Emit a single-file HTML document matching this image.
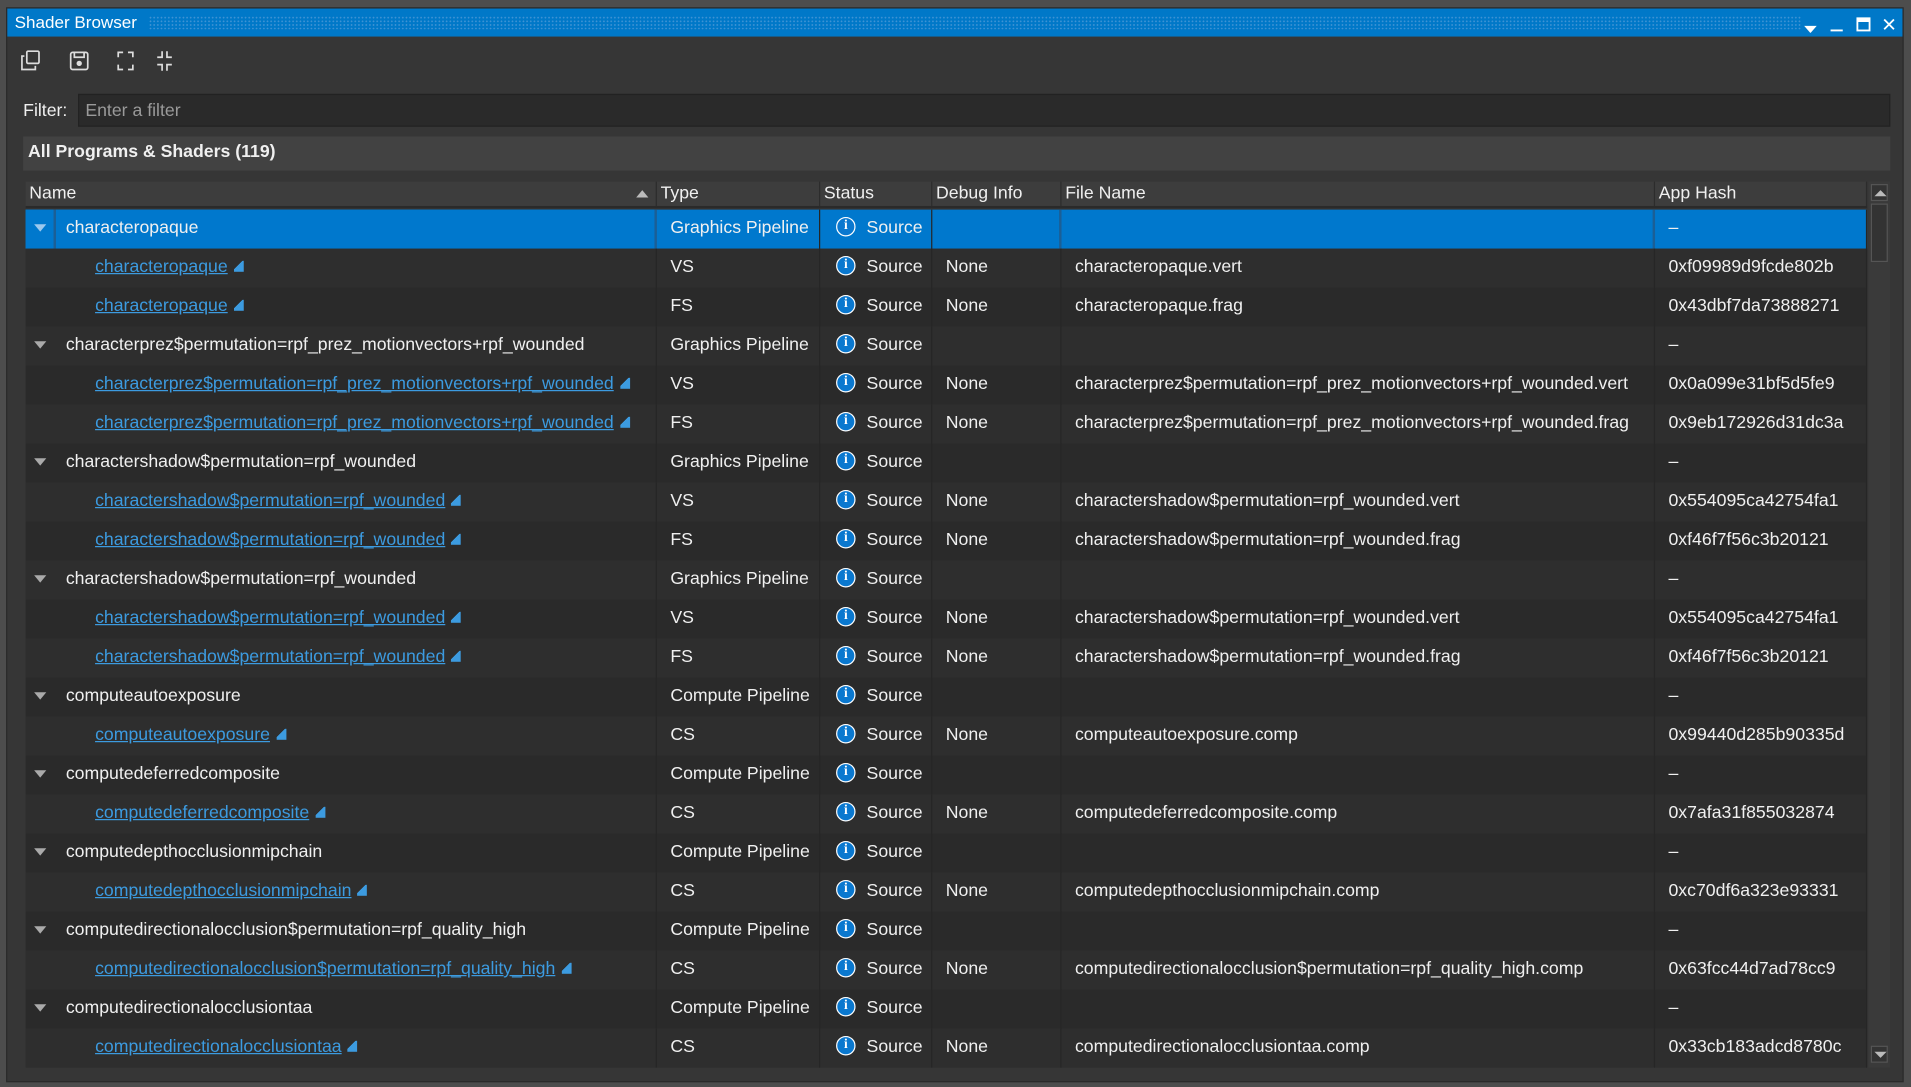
<!DOCTYPE html>
<html><head><meta charset="utf-8"><style>
*{margin:0;padding:0;box-sizing:border-box}
html,body{width:1911px;height:1087px;overflow:hidden;background:#4d4d4d}
#s{position:absolute;left:0;top:0;width:1568px;height:892px;transform:scale(1.21875);transform-origin:0 0;font-family:"Liberation Sans",sans-serif;font-size:14.5px;color:#f0f0f0}
.win{position:absolute;left:5px;top:6px;width:1557px;height:882px;background:#363636;border:1px solid #2a2a2a}
.tb{position:absolute;left:0;top:0;width:100%;height:23px;background:#0078c8}
.hatch{position:absolute;left:116px;top:6px;width:1356px;height:11px;background-image:radial-gradient(#3f93d4 0.6px,transparent 0.8px);background-size:3px 3px}
.abs{position:absolute}
.filter{position:absolute;left:58px;top:70px;width:1487px;height:27px;background:#2a2a2a;border:1px solid #222;color:#9a9a9a;padding:5px 5px;font-size:14.5px}
.grp{position:absolute;left:13px;top:105px;width:1532px;height:28px;background:#424242;font-weight:bold;padding:5px 4px}
.hdr{position:absolute;left:15px;top:142px;width:1511px;height:22px;background:#3d3d3d;display:flex;border-bottom:2px solid #2a2a2a}
.hdr div{border-right:1px solid #2c2c2c;padding:2px 3px}
.r{position:absolute;left:15px;width:1511px;height:32px;display:flex;line-height:30px}
.r>div{border-right:1px solid #262626;white-space:nowrap;overflow:hidden}
.c1{width:518px}.c2{width:134px;padding-left:11px}.c3{width:92px;padding-left:13px}.c4{width:106px;padding-left:11px}.c5{width:487px;padding-left:11px}.c6{width:174px;padding-left:11px}
.a{background:#2e2e2e}.b{background:#2a2a2a}
.sel{background:#0078cd}
.p{padding-left:33px;position:relative}
.p::before{content:"";position:absolute;left:7px;top:12px;border-left:5px solid transparent;border-right:5px solid transparent;border-top:6px solid #aaa}
.sel .p::before{border-top-color:#9cc8ee}
.ch{padding-left:57px}
.ch a{color:#3c9be0;text-decoration:underline}
.ln{display:inline-block;width:8px;height:9px;margin-left:5px;background:linear-gradient(135deg,transparent 40%,#3c9be0 40%);vertical-align:0}
.i{display:inline-block;position:relative;top:-1px;width:16px;height:16px;border-radius:50%;background:#0a78cf;border:1.5px solid #fff;color:#fff;font-size:11px;font-weight:bold;text-align:center;line-height:13px;vertical-align:middle;margin-right:9px;font-family:"Liberation Serif",serif}
.sb{position:absolute;left:1527px;top:142px;width:18px;height:727px;background:#3a3a3a}
</style></head><body><div id="s">
<div class="win">
<div class="tb"><span class="abs" style="left:6px;top:3px;color:#fff;font-size:14px">Shader Browser</span><div class="hatch"></div>
<svg class="abs" style="left:1474px;top:6px" width="80" height="14" viewBox="0 0 80 14" fill="none" stroke="#fff" stroke-width="1.5"><path d="M2 9h7l-3.5 4z" fill="#fff"/><path d="M22 12h10"/><rect x="44" y="2" width="10" height="10"/><path d="M44 3.5h10" stroke-width="3"/><path d="M66 3l8 8M74 3l-8 8"/></svg></div>
<svg class="abs" style="left:10px;top:33px" width="130" height="20" viewBox="0 0 130 20" fill="none" stroke="#ddd" stroke-width="1.4"><rect x="6" y="2" width="10" height="10" rx="1"/><path d="M4 6H2v11h11v-3"/><rect x="42" y="3" width="14" height="14" rx="1.5"/><path d="M45 3v4h8V3"/><circle cx="49" cy="12" r="1.5" fill="#ddd"/><path d="M81 7V3h4M89 3h4v4M93 13v4h-4M85 17h-4v-4"/><path d="M117 2v5h-4M121 2v5h4M113 13h4v5M125 13h-4v5"/></svg>
<span class="abs" style="left:13px;top:76px">Filter:</span>
<div class="filter">Enter a filter</div>
<div class="grp">All Programs &amp; Shaders (119)</div>
<div class="hdr"><div style="width:518px;position:relative">Name<span style="position:absolute;right:6px;top:7px;border-left:5px solid transparent;border-right:5px solid transparent;border-bottom:6px solid #bbb"></span></div><div style="width:134px">Type</div><div style="width:92px">Status</div><div style="width:106px">Debug Info</div><div style="width:487px">File Name</div><div style="width:174px">App Hash</div></div>
<div class="sb"><div style="position:absolute;left:2px;top:2px;width:14px;height:14px;border:1px solid #555;background:#333"><div style="margin:4px 0 0 2px;border-left:5px solid transparent;border-right:5px solid transparent;border-bottom:5px solid #bbb;width:0"></div></div><div style="position:absolute;left:2px;top:18px;width:14px;height:48px;border:1px solid #555;background:#333"></div><div style="position:absolute;left:2px;top:709px;width:14px;height:14px;border:1px solid #555;background:#333"><div style="margin:4px 0 0 2px;border-left:5px solid transparent;border-right:5px solid transparent;border-top:5px solid #bbb;width:0"></div></div></div>

<div class="r sel" style="top:165px"><div class="c1 p" style="background:linear-gradient(to right,#0078cd 23px,#1b5f96 23px,#1b5f96 25px,#0078cd 25px);border-right:2px solid #1b5f96">characteropaque</div><div class="c2">Graphics Pipeline</div><div class="c3"><span class="i">i</span>Source</div><div class="c4" style="border-right:2px solid #1b5f96"></div><div class="c5" style="border-right:2px solid #1b5f96"></div><div class="c6">–</div></div>
<div class="r a" style="top:197px"><div class="c1 ch"><a>characteropaque</a><span class="ln"></span></div><div class="c2">VS</div><div class="c3"><span class="i">i</span>Source</div><div class="c4">None</div><div class="c5">characteropaque.vert</div><div class="c6">0xf09989d9fcde802b</div></div>
<div class="r b" style="top:229px"><div class="c1 ch"><a>characteropaque</a><span class="ln"></span></div><div class="c2">FS</div><div class="c3"><span class="i">i</span>Source</div><div class="c4">None</div><div class="c5">characteropaque.frag</div><div class="c6">0x43dbf7da73888271</div></div>
<div class="r a" style="top:261px"><div class="c1 p">characterprez$permutation=rpf_prez_motionvectors+rpf_wounded</div><div class="c2">Graphics Pipeline</div><div class="c3"><span class="i">i</span>Source</div><div class="c4"></div><div class="c5"></div><div class="c6">–</div></div>
<div class="r b" style="top:293px"><div class="c1 ch"><a>characterprez$permutation=rpf_prez_motionvectors+rpf_wounded</a><span class="ln"></span></div><div class="c2">VS</div><div class="c3"><span class="i">i</span>Source</div><div class="c4">None</div><div class="c5">characterprez$permutation=rpf_prez_motionvectors+rpf_wounded.vert</div><div class="c6">0x0a099e31bf5d5fe9</div></div>
<div class="r a" style="top:325px"><div class="c1 ch"><a>characterprez$permutation=rpf_prez_motionvectors+rpf_wounded</a><span class="ln"></span></div><div class="c2">FS</div><div class="c3"><span class="i">i</span>Source</div><div class="c4">None</div><div class="c5">characterprez$permutation=rpf_prez_motionvectors+rpf_wounded.frag</div><div class="c6">0x9eb172926d31dc3a</div></div>
<div class="r b" style="top:357px"><div class="c1 p">charactershadow$permutation=rpf_wounded</div><div class="c2">Graphics Pipeline</div><div class="c3"><span class="i">i</span>Source</div><div class="c4"></div><div class="c5"></div><div class="c6">–</div></div>
<div class="r a" style="top:389px"><div class="c1 ch"><a>charactershadow$permutation=rpf_wounded</a><span class="ln"></span></div><div class="c2">VS</div><div class="c3"><span class="i">i</span>Source</div><div class="c4">None</div><div class="c5">charactershadow$permutation=rpf_wounded.vert</div><div class="c6">0x554095ca42754fa1</div></div>
<div class="r b" style="top:421px"><div class="c1 ch"><a>charactershadow$permutation=rpf_wounded</a><span class="ln"></span></div><div class="c2">FS</div><div class="c3"><span class="i">i</span>Source</div><div class="c4">None</div><div class="c5">charactershadow$permutation=rpf_wounded.frag</div><div class="c6">0xf46f7f56c3b20121</div></div>
<div class="r a" style="top:453px"><div class="c1 p">charactershadow$permutation=rpf_wounded</div><div class="c2">Graphics Pipeline</div><div class="c3"><span class="i">i</span>Source</div><div class="c4"></div><div class="c5"></div><div class="c6">–</div></div>
<div class="r b" style="top:485px"><div class="c1 ch"><a>charactershadow$permutation=rpf_wounded</a><span class="ln"></span></div><div class="c2">VS</div><div class="c3"><span class="i">i</span>Source</div><div class="c4">None</div><div class="c5">charactershadow$permutation=rpf_wounded.vert</div><div class="c6">0x554095ca42754fa1</div></div>
<div class="r a" style="top:517px"><div class="c1 ch"><a>charactershadow$permutation=rpf_wounded</a><span class="ln"></span></div><div class="c2">FS</div><div class="c3"><span class="i">i</span>Source</div><div class="c4">None</div><div class="c5">charactershadow$permutation=rpf_wounded.frag</div><div class="c6">0xf46f7f56c3b20121</div></div>
<div class="r b" style="top:549px"><div class="c1 p">computeautoexposure</div><div class="c2">Compute Pipeline</div><div class="c3"><span class="i">i</span>Source</div><div class="c4"></div><div class="c5"></div><div class="c6">–</div></div>
<div class="r a" style="top:581px"><div class="c1 ch"><a>computeautoexposure</a><span class="ln"></span></div><div class="c2">CS</div><div class="c3"><span class="i">i</span>Source</div><div class="c4">None</div><div class="c5">computeautoexposure.comp</div><div class="c6">0x99440d285b90335d</div></div>
<div class="r b" style="top:613px"><div class="c1 p">computedeferredcomposite</div><div class="c2">Compute Pipeline</div><div class="c3"><span class="i">i</span>Source</div><div class="c4"></div><div class="c5"></div><div class="c6">–</div></div>
<div class="r a" style="top:645px"><div class="c1 ch"><a>computedeferredcomposite</a><span class="ln"></span></div><div class="c2">CS</div><div class="c3"><span class="i">i</span>Source</div><div class="c4">None</div><div class="c5">computedeferredcomposite.comp</div><div class="c6">0x7afa31f855032874</div></div>
<div class="r b" style="top:677px"><div class="c1 p">computedepthocclusionmipchain</div><div class="c2">Compute Pipeline</div><div class="c3"><span class="i">i</span>Source</div><div class="c4"></div><div class="c5"></div><div class="c6">–</div></div>
<div class="r a" style="top:709px"><div class="c1 ch"><a>computedepthocclusionmipchain</a><span class="ln"></span></div><div class="c2">CS</div><div class="c3"><span class="i">i</span>Source</div><div class="c4">None</div><div class="c5">computedepthocclusionmipchain.comp</div><div class="c6">0xc70df6a323e93331</div></div>
<div class="r b" style="top:741px"><div class="c1 p">computedirectionalocclusion$permutation=rpf_quality_high</div><div class="c2">Compute Pipeline</div><div class="c3"><span class="i">i</span>Source</div><div class="c4"></div><div class="c5"></div><div class="c6">–</div></div>
<div class="r a" style="top:773px"><div class="c1 ch"><a>computedirectionalocclusion$permutation=rpf_quality_high</a><span class="ln"></span></div><div class="c2">CS</div><div class="c3"><span class="i">i</span>Source</div><div class="c4">None</div><div class="c5">computedirectionalocclusion$permutation=rpf_quality_high.comp</div><div class="c6">0x63fcc44d7ad78cc9</div></div>
<div class="r b" style="top:805px"><div class="c1 p">computedirectionalocclusiontaa</div><div class="c2">Compute Pipeline</div><div class="c3"><span class="i">i</span>Source</div><div class="c4"></div><div class="c5"></div><div class="c6">–</div></div>
<div class="r a" style="top:837px"><div class="c1 ch"><a>computedirectionalocclusiontaa</a><span class="ln"></span></div><div class="c2">CS</div><div class="c3"><span class="i">i</span>Source</div><div class="c4">None</div><div class="c5">computedirectionalocclusiontaa.comp</div><div class="c6">0x33cb183adcd8780c</div></div>
</div>
</div></body></html>
